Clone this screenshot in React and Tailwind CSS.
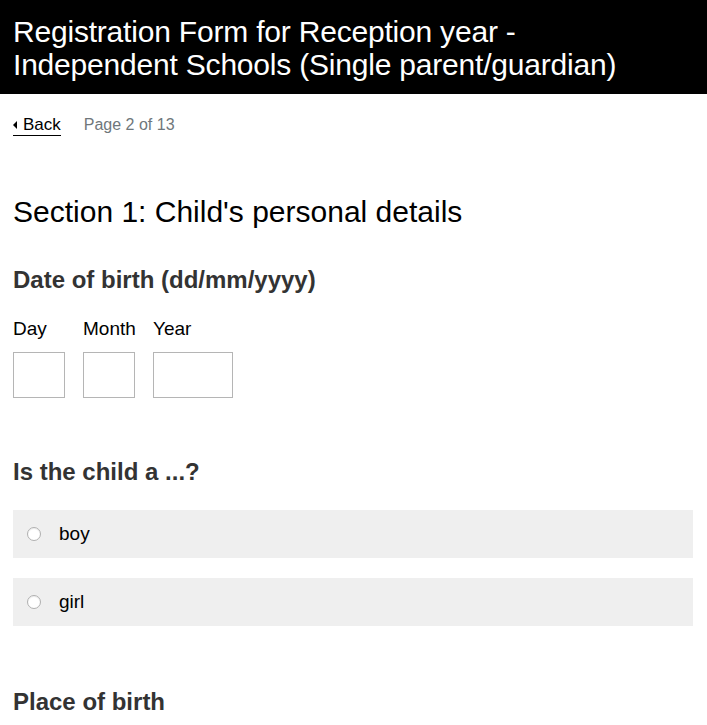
import React from 'react';

export default function App() {
  const font = { fontFamily: '"Liberation Sans", Arial, sans-serif' };

  return (
    <div className="min-h-[725px] bg-white" style={font}>
      {/* Header */}
      <header className="bg-black px-[13px] pt-[15px] pb-[13px]">
        <h1 className="max-w-[650px] text-white text-[30px] leading-[33px] font-normal tracking-[-0.2px]">
          Registration Form for Reception year - Independent Schools (Single parent/guardian)
        </h1>
      </header>

      <main className="px-[13px]">
        {/* Nav */}
        <div className="flex items-start gap-[23px] mt-[21px] text-[16px] leading-[20px]">
          <a href="#" className="flex items-center gap-[6px] text-[17px] text-black border-b border-black">
            <span className="inline-block w-0 h-0 border-y-[4px] border-y-transparent border-r-[4px] border-r-black" />
            Back
          </a>
          <span className="text-[#6f777b]">Page 2 of 13</span>
        </div>

        <h2 className="mt-[58px] text-[30px] leading-[36px] text-black">
          Section 1: Child's personal details
        </h2>

        {/* Date of birth */}
        <h3 className="mt-[36px] text-[24px] leading-[28px] font-bold text-[#333]">
          Date of birth (dd/mm/yyyy)
        </h3>
        <div className="flex gap-[18px] mt-[24px]">
          {[
            ['Day', 'w-[52px]'],
            ['Month', 'w-[52px]'],
            ['Year', 'w-[80px]'],
          ].map(([label, w]) => (
            <label key={label} className={`flex flex-col ${w}`}>
              <span className="text-[19px] leading-[22px] text-black whitespace-nowrap">{label}</span>
              <input type="text" className={`${w} h-[46px] mt-[12px] border border-[#b5b5b5] bg-white`} />
            </label>
          ))}
        </div>

        {/* Gender */}
        <h3 className="mt-[60px] text-[24px] leading-[28px] font-bold text-[#333]">
          Is the child a ...?
        </h3>
        <div className="mt-[24px] flex flex-col gap-[20px] w-[680px]">
          {['boy', 'girl'].map(opt => (
            <label key={opt} className="flex items-center h-[48px] bg-[#efefef] pl-[14px]">
              <span className="w-[14px] h-[14px] rounded-full border border-[#b0b0b0] bg-white shadow-[inset_0_1px_1px_rgba(0,0,0,0.08)]" />
              <span className="ml-[18px] text-[19px] leading-[22px] text-black">{opt}</span>
            </label>
          ))}
        </div>

        <h3 className="mt-[62px] text-[24px] leading-[28px] font-bold text-[#333]">
          Place of birth
        </h3>
      </main>
    </div>
  );
}
